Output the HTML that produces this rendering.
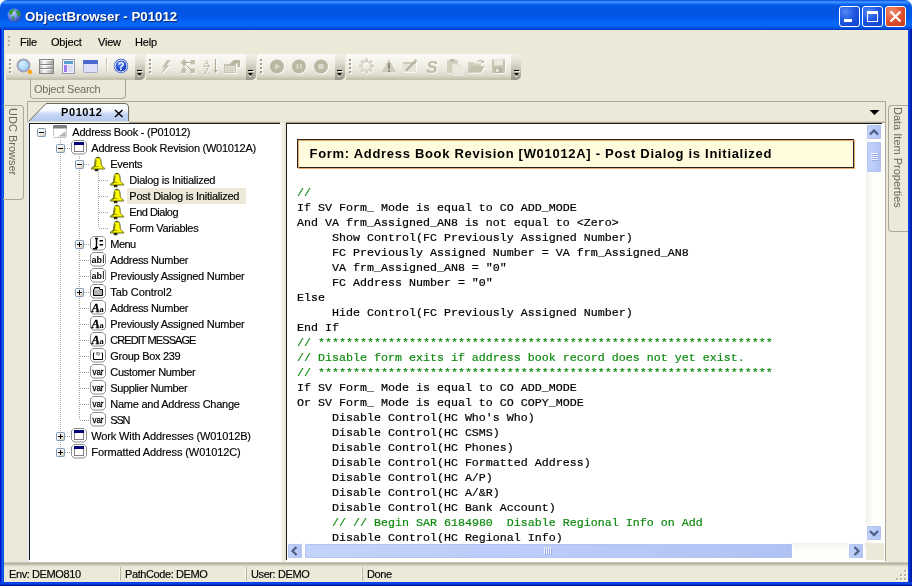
<!DOCTYPE html>
<html>
<head>
<meta charset="utf-8">
<title>ObjectBrowser - P01012</title>
<style>
*{box-sizing:border-box;margin:0;padding:0}
html,body{width:912px;height:586px;overflow:hidden;background:#ece9d8}
body{position:relative;font-family:"Liberation Sans",sans-serif;font-size:11px;color:#000}
.abs{position:absolute}
svg{position:absolute;overflow:visible}
#win{position:absolute;left:0;top:0;width:912px;height:586px;background:#ece9d8;overflow:hidden;will-change:transform}
#bl{left:0;top:29px;width:4px;height:557px;background:linear-gradient(90deg,#0016d0 0,#0016d0 1px,#0836da 1px,#0836da 2px,#1664ee 2px,#1664ee 3px,#0052de 3px)}
#br{left:908px;top:29px;width:4px;height:557px;background:linear-gradient(90deg,#0a44e4 0,#0a44e4 1px,#0434d4 1px,#0434d4 2px,#0024ba 2px,#0024ba 3px,#001aa6 3px)}
#bb{left:0;top:582px;width:912px;height:4px;background:linear-gradient(180deg,#0a40e6 0,#0a40e6 1px,#0a44ee 1px,#0a44ee 2px,#002cc8 2px,#002cc8 3px,#001aa8 3px)}
#title{left:0;top:0;width:912px;height:30px;border-radius:7px 7px 0 0;
background:linear-gradient(180deg,#0040d8 0px,#2a7cf8 1px,#3c90ff 2.500px,#1068f0 4px,#0458e4 6px,#0054e2 10px,#0258ea 18px,#0668fa 23px,#0664f4 26px,#0450dc 28px,#0034c0 30px)}
#title .txt{left:25px;top:9px;color:#fff;font-weight:bold;font-size:13.3px;line-height:16px;text-shadow:1px 1px 1px #0a246a;white-space:nowrap}
.tb{top:6px;width:21px;height:21px;border:1px solid #fff;border-radius:3px;background:radial-gradient(circle at 30% 25%,#5588f4 0%,#2058e2 45%,#0c40c8 100%)}
.tb.close{background:radial-gradient(circle at 30% 25%,#f09070 0%,#e0532e 50%,#c03818 100%)}
.menu span{position:absolute;top:36px;font-size:11px;line-height:13px;letter-spacing:-.2px;-webkit-text-stroke:.15px #000}
.bar{top:54px;height:26px;border-radius:0 5px 5px 0;background:linear-gradient(180deg,#fbfaf7 0%,#f4f3ec 30%,#ebe9de 60%,#dddbcd 82%,#c9c6b4 94%,#c0bdab 100%)}
.bar .dd{position:absolute;right:0;top:0;width:10px;height:26px;border-radius:0 5px 5px 0;background:linear-gradient(180deg,#f3f2ec 0%,#e2e0d4 30%,#c0bdac 65%,#98968a 100%)}
.sunk{background:#fff;border-top:1px solid #404040;border-left:1px solid #404040}
.code{font-family:"Liberation Mono",monospace;font-size:11.67px;line-height:15px;white-space:pre;color:#000;-webkit-text-stroke:.2px #000}
.code .g{color:#0f8a0f;-webkit-text-stroke:.2px #0f8a0f}
.tree{font-size:11px;white-space:nowrap}
.tree .t{position:absolute;height:16px;line-height:16px;font-size:11px;letter-spacing:-.25px;-webkit-text-stroke:.15px #000}
.status span{position:absolute;top:568px;font-size:11px;line-height:13px;letter-spacing:-.4px;-webkit-text-stroke:.15px #000}
.vsep{position:absolute;top:567px;width:1px;height:14px;background:#b8b5a4;box-shadow:-1px 0 0 #f8f7f0}
.sb{position:absolute;background:linear-gradient(90deg,#c4d3fb,#bccbf8 50%,#b0c2f4);border:1px solid #fff;border-radius:2px;box-shadow:0 0 0 1px #b4c4f0 inset}
</style>
</head>
<body>
<div id="win">
<div class="abs" style="left:0;top:0;width:912px;height:10px;background:#fff"></div>
<div id="title" class="abs">
  <svg style="left:6.900px;top:8px" width="14.800" height="14.800" viewBox="0 0 15 15">
    <defs><radialGradient id="gl" cx="40%" cy="35%" r="65%"><stop offset="0" stop-color="#c0ccff"/><stop offset="0.6" stop-color="#6080e4"/><stop offset="1" stop-color="#3048a8"/></radialGradient></defs>
    <circle cx="7.5" cy="7.5" r="7" fill="url(#gl)"/>
    <path d="M2 4 Q4 1 8 1.2 Q7 3.5 5.5 4 Q6 6 4 7 Q2.5 6.5 2 4Z M9 3 Q12 2 13.5 5 Q13.5 8 11.5 9 Q10 7 10.5 5.5 Q9 4.5 9 3Z M5 8 Q7.5 8 7.5 10 Q6.5 12.5 6 12 Q5 10 5 8Z" fill="#2a9a20"/>
  </svg>
  <div class="abs txt">ObjectBrowser - P01012</div>
  <div class="abs tb" style="left:839px"><div class="abs" style="left:4px;top:12px;width:8px;height:3px;background:#fff"></div></div>
  <div class="abs tb" style="left:862px"><div class="abs" style="left:4px;top:4px;width:11px;height:11px;border:1px solid #fff;border-top-width:3px"></div></div>
  <div class="abs tb close" style="left:885px"><svg style="left:0;top:0" width="19" height="19" viewBox="0 0 19 19"><path d="M4.5 4.5 L14.5 14.5 M14.5 4.5 L4.5 14.5" stroke="#fff" stroke-width="2.2"/></svg></div>
</div>
<div id="bl" class="abs"></div><div id="br" class="abs"></div><div id="bb" class="abs"></div>

<div class="menu">
  <svg style="left:8px;top:35px" width="3" height="14"><g fill="#b5b2a0"><rect x="0" y="1" width="2" height="2"/><rect x="0" y="5" width="2" height="2"/><rect x="0" y="9" width="2" height="2"/></g></svg>
  <span style="left:20px">File</span><span style="left:51px">Object</span><span style="left:98px">View</span><span style="left:135px">Help</span>
</div>

<div class="abs bar" style="left:6px;width:139px"><div class="dd"></div></div>
<div class="abs bar" style="left:146px;width:110px"><div class="dd"></div></div>
<div class="abs bar" style="left:257px;width:88px"><div class="dd"></div></div>
<div class="abs bar" style="left:346px;width:175px"><div class="dd"></div></div>

<svg style="left:0;top:54px" width="530" height="26" viewBox="0 54 530 26">
<defs>
  <linearGradient id="silver" x1="0" y1="0" x2="1" y2="0"><stop offset="0" stop-color="#b4b4b4"/><stop offset="0.35" stop-color="#fafafa"/><stop offset="0.7" stop-color="#c4c4c4"/><stop offset="1" stop-color="#a0a0a0"/></linearGradient>
  <radialGradient id="lens" cx="40%" cy="35%" r="70%"><stop offset="0" stop-color="#d8f2ff"/><stop offset="1" stop-color="#8cc8f0"/></radialGradient>
  <radialGradient id="helpg" cx="40%" cy="30%" r="70%"><stop offset="0" stop-color="#5a8cf8"/><stop offset="1" stop-color="#0a30b8"/></radialGradient>
</defs>
<g transform="translate(9,59)"><g fill="#fff"><rect x="1" y="1" width="2" height="2"/><rect x="1" y="5" width="2" height="2"/><rect x="1" y="9" width="2" height="2"/><rect x="1" y="13" width="2" height="2"/></g><g fill="#a09e8c"><rect x="0" y="0" width="2" height="2"/><rect x="0" y="4" width="2" height="2"/><rect x="0" y="8" width="2" height="2"/><rect x="0" y="12" width="2" height="2"/></g></g><g transform="translate(149,59)"><g fill="#fff"><rect x="1" y="1" width="2" height="2"/><rect x="1" y="5" width="2" height="2"/><rect x="1" y="9" width="2" height="2"/><rect x="1" y="13" width="2" height="2"/></g><g fill="#a09e8c"><rect x="0" y="0" width="2" height="2"/><rect x="0" y="4" width="2" height="2"/><rect x="0" y="8" width="2" height="2"/><rect x="0" y="12" width="2" height="2"/></g></g><g transform="translate(260,59)"><g fill="#fff"><rect x="1" y="1" width="2" height="2"/><rect x="1" y="5" width="2" height="2"/><rect x="1" y="9" width="2" height="2"/><rect x="1" y="13" width="2" height="2"/></g><g fill="#a09e8c"><rect x="0" y="0" width="2" height="2"/><rect x="0" y="4" width="2" height="2"/><rect x="0" y="8" width="2" height="2"/><rect x="0" y="12" width="2" height="2"/></g></g><g transform="translate(349,59)"><g fill="#fff"><rect x="1" y="1" width="2" height="2"/><rect x="1" y="5" width="2" height="2"/><rect x="1" y="9" width="2" height="2"/><rect x="1" y="13" width="2" height="2"/></g><g fill="#a09e8c"><rect x="0" y="0" width="2" height="2"/><rect x="0" y="4" width="2" height="2"/><rect x="0" y="8" width="2" height="2"/><rect x="0" y="12" width="2" height="2"/></g></g>
<g transform="translate(137,70)"><rect x="0" y="0" width="5" height="1" fill="#000"/><path d="M0 3 H5 L2.5 5.5 Z" fill="#000"/><path d="M1 6.5 L3 6.5 M1 1.5 H6" stroke="#fff" stroke-width="1" opacity="0.8"/></g><g transform="translate(248,70)"><rect x="0" y="0" width="5" height="1" fill="#000"/><path d="M0 3 H5 L2.5 5.5 Z" fill="#000"/><path d="M1 6.5 L3 6.5 M1 1.5 H6" stroke="#fff" stroke-width="1" opacity="0.8"/></g><g transform="translate(337,70)"><rect x="0" y="0" width="5" height="1" fill="#000"/><path d="M0 3 H5 L2.5 5.5 Z" fill="#000"/><path d="M1 6.5 L3 6.5 M1 1.5 H6" stroke="#fff" stroke-width="1" opacity="0.8"/></g><g transform="translate(514,70)"><rect x="0" y="0" width="5" height="1" fill="#000"/><path d="M0 3 H5 L2.5 5.5 Z" fill="#000"/><path d="M1 6.5 L3 6.5 M1 1.5 H6" stroke="#fff" stroke-width="1" opacity="0.8"/></g>
<!-- magnifier -->
<circle cx="23.5" cy="65.5" r="6" fill="url(#lens)" stroke="#a4a4bc" stroke-width="2"/>
<path d="M27.5 69.5 L30 72" stroke="#b0a8a8" stroke-width="2"/>
<circle cx="30" cy="72" r="2.2" fill="#f8a818"/>
<!-- database -->
<rect x="39.5" y="59.5" width="14" height="14" fill="url(#silver)" stroke="#858585"/>
<path d="M39.5 64.5 H53.5 M39.5 68.5 H53.5" stroke="#858585"/><path d="M40.5 65.5 H52.5 M40.5 69.5 H52.5 M40.5 60.5 H52.5" stroke="#fff" opacity=".7"/>
<!-- layout window -->
<rect x="62.500" y="59.500" width="12" height="14" fill="#eef0fa" stroke="#9a9aaa"/>
<rect x="64" y="61" width="9" height="3" fill="#58a0d0"/><rect x="64" y="65" width="3" height="7" fill="#a07cf4"/><rect x="68" y="65" width="5" height="7" fill="#dcdcf4"/>
<!-- window -->
<rect x="83.500" y="60.500" width="14" height="12" rx="1" fill="#dde0f6" stroke="#a8acc8"/>
<rect x="83" y="60" width="15" height="4" rx="1" fill="#4a68d0"/>
<!-- sep -->
<rect x="106" y="58" width="1" height="15" fill="#c8c5b2"/><rect x="107" y="58" width="1" height="15" fill="#fbfaf6"/>
<!-- help -->
<circle cx="121" cy="66" r="7.2" fill="#2850c8"/><circle cx="121" cy="66" r="6" fill="url(#helpg)" stroke="#fff" stroke-width="1"/>
<text x="121" y="70.300" text-anchor="middle" font-family="Liberation Sans, sans-serif" font-weight="bold" font-size="11" fill="#fff">?</text>
<!-- disabled icons -->
<filter id="soft" x="-5%" y="-20%" width="110%" height="140%"><feGaussianBlur in="SourceGraphic" stdDeviation=".45" result="b"/><feColorMatrix in="b" type="matrix" values="0 0 0 0 1  0 0 0 0 1  0 0 0 0 1  0 0 0 .75 0" result="w"/><feOffset in="w" dx="1" dy="1" result="wo"/><feMerge><feMergeNode in="wo"/><feMergeNode in="b"/></feMerge></filter>
<g filter="url(#soft)">
<g fill="#c4c2af" stroke="none">
  <!-- lightning -->
  <path d="M167 60 L171 60 L167 65 L169.500 65 L162.500 73 L161.500 72.500 L164.500 67.500 L162 67.500 Z"/>
  <!-- network -->
  <path d="M184 59 L187.500 62.500 L184 66 L180.500 62.500 Z"/><rect x="190.500" y="60" width="4.500" height="4.500"/><rect x="181.500" y="68.500" width="4.500" height="4.500"/><rect x="190.500" y="68.500" width="4.500" height="4.500"/>
  <path d="M184 62.500 H192 M184 63 L192 71 M184 63 V70" stroke="#b4b29c" stroke-width="1" fill="none"/>
  <!-- chart -->
  <rect x="224" y="64" width="12" height="9" fill="#c6c4b0"/><rect x="225" y="66" width="10" height="6" fill="#e2e0d2"/><path d="M229 64.500 L234 60 H240 V67 H237.500 V63 L232 66 Z" fill="#b8b6a0"/>
  <path d="M226 68 H234 M226 70.500 H234" stroke="#cac8b6" stroke-width="1"/>
</g>
<!-- AZ sort -->
<text x="206.500" y="65.500" text-anchor="middle" font-family="Liberation Serif, serif" font-size="9" fill="#b4b29c">A</text>
<text x="206.500" y="73.500" text-anchor="middle" font-family="Liberation Serif, serif" font-size="9" fill="#b4b29c">Z</text>
<path d="M203 66.500 H210" stroke="#c4c2ae"/><path d="M215.500 59 V71" stroke="#aeac96"/><path d="M213.500 70 H217.500 L215.500 73 Z" fill="#aeac96"/>
<!-- play/pause/stop -->
<g fill="#bab8a3"><circle cx="277" cy="66.500" r="7"/><circle cx="299" cy="66.500" r="7"/><circle cx="321" cy="66.500" r="7"/></g>
<g fill="#dcdacc"><path d="M275 63.500 L280.500 66.500 L275 69.500 Z"/><rect x="296.500" y="64" width="1.800" height="5"/><rect x="300" y="64" width="1.800" height="5"/><rect x="318.500" y="64" width="5" height="5"/></g>
<!-- gear -->
<circle cx="366.500" cy="66" r="4.500" fill="none" stroke="#d4d2c2" stroke-width="1.600"/>
<g fill="#d4d2c2"><rect x="365" y="58.500" width="3" height="3"/><rect x="365" y="70.500" width="3" height="3"/><rect x="359" y="64.500" width="3" height="3"/><rect x="371" y="64.500" width="3" height="3"/><rect x="360.700" y="60.200" width="3" height="3"/><rect x="369.300" y="60.200" width="3" height="3"/><rect x="360.700" y="68.800" width="3" height="3"/><rect x="369.300" y="68.800" width="3" height="3"/></g>
<!-- warning -->
<path d="M389 59 L396.500 72.500 H381.500 Z" fill="#cfcdbb"/><rect x="388" y="63" width="2" height="6" fill="#8c8a76"/><rect x="388" y="70" width="2" height="2" fill="#8c8a76"/>
<!-- edit -->
<rect x="403" y="62" width="13" height="10" fill="#e6e4d8"/><rect x="403" y="62" width="13" height="2" fill="#cccab8"/><path d="M406 70.500 L416.500 60" stroke="#b6b49e" stroke-width="2.400"/>
<!-- S -->
<text x="432" y="73" text-anchor="middle" font-family="Liberation Sans, sans-serif" font-style="italic" font-weight="bold" font-size="17" fill="#bcbaa5">S</text>
<!-- paste -->
<rect x="447" y="60" width="11" height="13" rx="1" fill="#d2d0be"/><rect x="450" y="59" width="5" height="3" fill="#c2c0ac"/><path d="M452 64 H458 L461.500 67.500 V74 H452 Z" fill="#eceadf" stroke="#d0cebc" stroke-width=".6"/>
<!-- folder -->
<path d="M468 62 H473 L474.500 63.500 H481 V66 H484.500 L481 72.500 H468 Z" fill="#d0cebc"/><path d="M471 66 H484.500 L481 72.500 H468 Z" fill="#c4c2ae"/><path d="M477 61.500 Q480 58.500 483 61 L484 59.500 V63 H480.500 L482 62 Q480 60.500 478 62 Z" fill="#c0beaa"/>
<!-- save -->
<rect x="492" y="59.500" width="13" height="13.500" fill="#c6c4b0"/><rect x="494" y="59.500" width="9" height="6" fill="#eceadf"/><rect x="495" y="68" width="7" height="5" fill="#b6b4a0"/><rect x="496" y="69" width="2.500" height="3" fill="#eceadf"/>
</g>
</svg>

<div class="abs" style="left:30px;top:79px;width:96px;height:20px;border:1px solid #aca899;border-top:none;border-radius:0 0 4px 4px;color:#6f6d61;font-size:11px;line-height:21px;padding-left:3px;letter-spacing:-.25px">Object Search</div>
<!-- side tabs -->
<div class="abs" style="left:3px;top:105px;width:21px;height:95px;border:1px solid #aca899;border-left:none;border-radius:0 4px 4px 0"></div>
<div class="abs" style="left:18px;top:107.500px;transform-origin:0 0;transform:rotate(90deg);font-size:11px;line-height:11px;color:#6a685c;white-space:nowrap;letter-spacing:0px">UDC Browser</div>
<div class="abs" style="left:888px;top:105px;width:20px;height:127px;border:1px solid #aca899;border-right:none;border-radius:4px 0 0 4px"></div>
<div class="abs" style="left:903px;top:107px;transform-origin:0 0;transform:rotate(90deg);font-size:11px;line-height:11px;color:#6a685c;white-space:nowrap;letter-spacing:0px">Data Item Properties</div>

<!-- doc container -->
<div class="abs" style="left:27px;top:101px;width:859px;height:1px;background:#aca899"></div>
<div class="abs" style="left:27px;top:101px;width:1px;height:460px;background:#aca899"></div>
<div class="abs" style="left:885px;top:101px;width:1px;height:460px;background:#aca899"></div>

<!-- tab -->
<svg style="left:27px;top:101px" width="110" height="22" viewBox="0 0 110 22">
  <defs><linearGradient id="tg" x1="0" y1="0" x2="0" y2="1"><stop offset="0" stop-color="#ffffff"/><stop offset="0.36" stop-color="#f4f8fe"/><stop offset="0.54" stop-color="#c6d6f5"/><stop offset="1" stop-color="#b2c6f0"/></linearGradient></defs>
  <path d="M1.500 22 L1.500 20.500 L19 2.500 L98 2.500 Q101.500 2.500 101.500 6 L101.500 22 Z" fill="url(#tg)" stroke="#6a6a5e" stroke-width="1"/>
</svg>
<div class="abs" style="left:61px;top:106px;font-weight:bold;font-size:11px;line-height:13px;letter-spacing:.6px">P01012</div>
<svg style="left:114px;top:109px" width="10" height="9" viewBox="0 0 10 9"><path d="M1 1 L8.500 8 M8.500 1 L1 8" stroke="#000" stroke-width="1.500"/></svg>
<svg style="left:869px;top:110px" width="11" height="6"><path d="M.5 0 H10.500 L5.500 5 Z" fill="#000"/></svg>

<!-- panels -->
<div class="abs" style="left:27px;top:121px;width:858px;height:1px;background:#d8d5c5"></div>
<div class="abs" style="left:27px;top:122px;width:858px;height:440px;background:#fff;border-left:2px solid #e6e9f7;border-top:1px solid #aaa796"></div>
<div class="abs" style="left:29px;top:122px;width:100px;height:1px;background:#f4f5fb"></div>
<div class="abs" style="left:29px;top:123px;width:251px;height:437px;border-top:1px solid #1a1a1a;border-left:1px solid #1a1a1a"></div>
<div class="abs" style="left:280px;top:122px;width:6px;height:440px;background:linear-gradient(90deg,#fdfdfa,#f3f1e8 35%,#eeece0 70%,#e4e1d2)"></div>
<div class="abs" style="left:280px;top:121px;width:6px;height:2px;background:#e6e3d4"></div>
<div class="abs" style="left:286px;top:123px;width:596px;height:437px;border-top:1px solid #1a1a1a;border-left:1px solid #1a1a1a"></div>
<div class="tree">
<svg style="left:0;top:0" width="290" height="470" viewBox="0 0 290 470"><defs>
<linearGradient id="bx" x1="0" y1="0" x2="1" y2="1"><stop offset="0" stop-color="#fff"/><stop offset=".5" stop-color="#f4f2ea"/><stop offset="1" stop-color="#c8c2b0"/></linearGradient>
<linearGradient id="rt" x1="0" y1="0" x2="1" y2="1"><stop offset="0" stop-color="#f0f0f0"/><stop offset="1" stop-color="#9a9a9a"/></linearGradient>
</defs>
<g stroke="#a2a2a2" stroke-width="1" stroke-dasharray="1 1" fill="none"><path d="M60.5 140 V452" /><path d="M79.5 156 V420" /><path d="M98.5 172 V228" /><path d="M65 148.5 H71" /><path d="M84 164.5 H90" /><path d="M99 180.5 H109" /><path d="M99 196.5 H109" /><path d="M99 212.5 H109" /><path d="M99 228.5 H109" /><path d="M84 244.5 H90" /><path d="M80 260.5 H90" /><path d="M80 276.5 H90" /><path d="M84 292.5 H90" /><path d="M80 308.5 H90" /><path d="M80 324.5 H90" /><path d="M80 340.5 H90" /><path d="M80 356.5 H90" /><path d="M80 372.5 H90" /><path d="M80 388.5 H90" /><path d="M80 404.5 H90" /><path d="M80 420.5 H90" /><path d="M65 436.5 H71" /><path d="M65 452.5 H71" /></g>
<g transform="translate(37,128)"><rect x=".5" y=".5" width="8" height="8" rx="1" fill="url(#bx)" stroke="#7b98b6"/><rect x="2" y="4" width="5" height="1" fill="#000"/></g>
<g transform="translate(52,124)"><rect x="1.5" y="1.5" width="13" height="12" rx="1" fill="#fff" stroke="#c4c4c4"/><rect x="1" y="1" width="14" height="3.5" rx="1" fill="#7e7e7e"/><path d="M13.5 7 V12.500 H6 Z" fill="url(#rt)"/></g>
<g transform="translate(56,144)"><rect x=".5" y=".5" width="8" height="8" rx="1" fill="url(#bx)" stroke="#7b98b6"/><rect x="2" y="4" width="5" height="1" fill="#000"/></g>
<g transform="translate(71,140)"><path d="M3 .5 H13 L15.500 3 V11.500 L13 14 H3 L.5 11.500 V3 Z" fill="#fff" stroke="#8e8e8e"/><rect x="3.500" y="2.500" width="9" height="9" fill="#fff" stroke="#808080"/><rect x="3" y="2" width="10" height="3" fill="#00007c"/></g>
<g transform="translate(75,160)"><rect x=".5" y=".5" width="8" height="8" rx="1" fill="url(#bx)" stroke="#7b98b6"/><rect x="2" y="4" width="5" height="1" fill="#000"/></g>
<g transform="translate(90,156)"><path d="M8 1.200 C6 1.200 5.200 2.800 5 5.200 L4.700 8.600 C4.500 10 2.600 11.400 1.400 12.100 L1.400 13 H14.600 V12.100 C13.400 11.400 11.500 10 11.300 8.600 L11 5.200 C10.800 2.800 10 1.200 8 1.200 Z" fill="#ffff00" stroke="#55551a" stroke-width=".9"/><path d="M6 4 L5.600 8.800 C5.400 10.200 4.200 11.200 3.400 11.800" stroke="#7a7a10" stroke-width="1.100" fill="none"/><path d="M6.500 1.800 H9.500" stroke="#4a4a30" stroke-width="1"/><path d="M4.500 10.500 H8.500" stroke="#8a8a10" stroke-width=".8"/><rect x="4.800" y="13" width="3.600" height="2.200" fill="#2a2a00"/></g>
<g transform="translate(109,172)"><path d="M8 1.200 C6 1.200 5.200 2.800 5 5.200 L4.700 8.600 C4.500 10 2.600 11.400 1.400 12.100 L1.400 13 H14.600 V12.100 C13.400 11.400 11.500 10 11.300 8.600 L11 5.200 C10.800 2.800 10 1.200 8 1.200 Z" fill="#ffff00" stroke="#55551a" stroke-width=".9"/><path d="M6 4 L5.600 8.800 C5.400 10.200 4.200 11.200 3.400 11.800" stroke="#7a7a10" stroke-width="1.100" fill="none"/><path d="M6.500 1.800 H9.500" stroke="#4a4a30" stroke-width="1"/><path d="M4.500 10.500 H8.500" stroke="#8a8a10" stroke-width=".8"/><rect x="4.800" y="13" width="3.600" height="2.200" fill="#2a2a00"/></g>
<g transform="translate(109,188)"><path d="M8 1.200 C6 1.200 5.200 2.800 5 5.200 L4.700 8.600 C4.500 10 2.600 11.400 1.400 12.100 L1.400 13 H14.600 V12.100 C13.400 11.400 11.500 10 11.300 8.600 L11 5.200 C10.800 2.800 10 1.200 8 1.200 Z" fill="#ffff00" stroke="#55551a" stroke-width=".9"/><path d="M6 4 L5.600 8.800 C5.400 10.200 4.200 11.200 3.400 11.800" stroke="#7a7a10" stroke-width="1.100" fill="none"/><path d="M6.500 1.800 H9.500" stroke="#4a4a30" stroke-width="1"/><path d="M4.500 10.500 H8.500" stroke="#8a8a10" stroke-width=".8"/><rect x="4.800" y="13" width="3.600" height="2.200" fill="#2a2a00"/></g>
<g transform="translate(109,204)"><path d="M8 1.200 C6 1.200 5.200 2.800 5 5.200 L4.700 8.600 C4.500 10 2.600 11.400 1.400 12.100 L1.400 13 H14.600 V12.100 C13.400 11.400 11.500 10 11.300 8.600 L11 5.200 C10.800 2.800 10 1.200 8 1.200 Z" fill="#ffff00" stroke="#55551a" stroke-width=".9"/><path d="M6 4 L5.600 8.800 C5.400 10.200 4.200 11.200 3.400 11.800" stroke="#7a7a10" stroke-width="1.100" fill="none"/><path d="M6.500 1.800 H9.500" stroke="#4a4a30" stroke-width="1"/><path d="M4.500 10.500 H8.500" stroke="#8a8a10" stroke-width=".8"/><rect x="4.800" y="13" width="3.600" height="2.200" fill="#2a2a00"/></g>
<g transform="translate(109,220)"><path d="M8 1.200 C6 1.200 5.200 2.800 5 5.200 L4.700 8.600 C4.500 10 2.600 11.400 1.400 12.100 L1.400 13 H14.600 V12.100 C13.400 11.400 11.500 10 11.300 8.600 L11 5.200 C10.800 2.800 10 1.200 8 1.200 Z" fill="#ffff00" stroke="#55551a" stroke-width=".9"/><path d="M6 4 L5.600 8.800 C5.400 10.200 4.200 11.200 3.400 11.800" stroke="#7a7a10" stroke-width="1.100" fill="none"/><path d="M6.500 1.800 H9.500" stroke="#4a4a30" stroke-width="1"/><path d="M4.500 10.500 H8.500" stroke="#8a8a10" stroke-width=".8"/><rect x="4.800" y="13" width="3.600" height="2.200" fill="#2a2a00"/></g>
<g transform="translate(75,240)"><rect x=".5" y=".5" width="8" height="8" rx="1" fill="url(#bx)" stroke="#7b98b6"/><rect x="2" y="4" width="5" height="1" fill="#000"/><rect x="4" y="2" width="1" height="5" fill="#000"/></g>
<g transform="translate(90,236)"><path d="M3 .5 H13 L15.500 3 V11.500 L13 14 H3 L.5 11.500 V3 Z" fill="#fff" stroke="#8e8e8e"/><path d="M5 2.500 H8 M6.500 2.500 V11.500 M5 11.500 H8" stroke="#000" stroke-width="1.400" fill="none"/><rect x="9.500" y="4" width="3.500" height="1.500" fill="#000"/><rect x="9.500" y="8" width="3.500" height="1.500" fill="#000"/><rect x="3" y="12" width="4" height="1.500" fill="#000"/></g>
<g transform="translate(90,252)"><path d="M3 .5 H13 L15.500 3 V11.500 L13 14 H3 L.5 11.500 V3 Z" fill="#fff" stroke="#8e8e8e"/><text x="1.500" y="11" font-family="Liberation Sans, sans-serif" font-weight="bold" font-size="9.500" fill="#000" textLength="10.500" lengthAdjust="spacingAndGlyphs">ab</text><text x="12.200" y="11" font-family="Liberation Sans, sans-serif" font-size="10" fill="#000">l</text></g>
<g transform="translate(90,268)"><path d="M3 .5 H13 L15.500 3 V11.500 L13 14 H3 L.5 11.500 V3 Z" fill="#fff" stroke="#8e8e8e"/><text x="1.500" y="11" font-family="Liberation Sans, sans-serif" font-weight="bold" font-size="9.500" fill="#000" textLength="10.500" lengthAdjust="spacingAndGlyphs">ab</text><text x="12.200" y="11" font-family="Liberation Sans, sans-serif" font-size="10" fill="#000">l</text></g>
<g transform="translate(75,288)"><rect x=".5" y=".5" width="8" height="8" rx="1" fill="url(#bx)" stroke="#7b98b6"/><rect x="2" y="4" width="5" height="1" fill="#000"/><rect x="4" y="2" width="1" height="5" fill="#000"/></g>
<g transform="translate(90,284)"><path d="M3 .5 H13 L15.500 3 V11.500 L13 14 H3 L.5 11.500 V3 Z" fill="#fff" stroke="#8e8e8e"/><path d="M3.500 11.500 V5.500 H4.500 V3.500 H9.500 V5.500 H12.500 V11.500 Z" fill="#b4b4b4" stroke="#000" stroke-width="1"/><path d="M4.500 5.500 H9.500" stroke="#e8e8e8"/></g>
<g transform="translate(90,300)"><path d="M3 .5 H13 L15.500 3 V11.500 L13 14 H3 L.5 11.500 V3 Z" fill="#fff" stroke="#8e8e8e"/><text x="1.500" y="11.500" font-family="Liberation Serif, serif" font-weight="bold" font-style="italic" font-size="12.500" fill="#000" stroke="#000" stroke-width=".35">A</text><text x="9.500" y="11.500" font-family="Liberation Serif, serif" font-weight="bold" font-size="8.500" fill="#000">a</text></g>
<g transform="translate(90,316)"><path d="M3 .5 H13 L15.500 3 V11.500 L13 14 H3 L.5 11.500 V3 Z" fill="#fff" stroke="#8e8e8e"/><text x="1.500" y="11.500" font-family="Liberation Serif, serif" font-weight="bold" font-style="italic" font-size="12.500" fill="#000" stroke="#000" stroke-width=".35">A</text><text x="9.500" y="11.500" font-family="Liberation Serif, serif" font-weight="bold" font-size="8.500" fill="#000">a</text></g>
<g transform="translate(90,332)"><path d="M3 .5 H13 L15.500 3 V11.500 L13 14 H3 L.5 11.500 V3 Z" fill="#fff" stroke="#8e8e8e"/><text x="1.500" y="11.500" font-family="Liberation Serif, serif" font-weight="bold" font-style="italic" font-size="12.500" fill="#000" stroke="#000" stroke-width=".35">A</text><text x="9.500" y="11.500" font-family="Liberation Serif, serif" font-weight="bold" font-size="8.500" fill="#000">a</text></g>
<g transform="translate(90,348)"><path d="M3 .5 H13 L15.500 3 V11.500 L13 14 H3 L.5 11.500 V3 Z" fill="#fff" stroke="#8e8e8e"/><path d="M4.500 5 H3.500 V11.500 H12.500 V5 H11.500" stroke="#000" fill="none"/><text x="8" y="6.500" text-anchor="middle" font-family="Liberation Sans, sans-serif" font-size="4.500" fill="#000">xy</text></g>
<g transform="translate(90,364)"><path d="M3 .5 H13 L15.500 3 V11.500 L13 14 H3 L.5 11.500 V3 Z" fill="#fff" stroke="#8e8e8e"/><text x="2.500" y="10.500" font-family="Liberation Sans, sans-serif" font-size="8.500" fill="#000" stroke="#000" stroke-width=".3" textLength="11" lengthAdjust="spacingAndGlyphs">var</text></g>
<g transform="translate(90,380)"><path d="M3 .5 H13 L15.500 3 V11.500 L13 14 H3 L.5 11.500 V3 Z" fill="#fff" stroke="#8e8e8e"/><text x="2.500" y="10.500" font-family="Liberation Sans, sans-serif" font-size="8.500" fill="#000" stroke="#000" stroke-width=".3" textLength="11" lengthAdjust="spacingAndGlyphs">var</text></g>
<g transform="translate(90,396)"><path d="M3 .5 H13 L15.500 3 V11.500 L13 14 H3 L.5 11.500 V3 Z" fill="#fff" stroke="#8e8e8e"/><text x="2.500" y="10.500" font-family="Liberation Sans, sans-serif" font-size="8.500" fill="#000" stroke="#000" stroke-width=".3" textLength="11" lengthAdjust="spacingAndGlyphs">var</text></g>
<g transform="translate(90,412)"><path d="M3 .5 H13 L15.500 3 V11.500 L13 14 H3 L.5 11.500 V3 Z" fill="#fff" stroke="#8e8e8e"/><text x="2.500" y="10.500" font-family="Liberation Sans, sans-serif" font-size="8.500" fill="#000" stroke="#000" stroke-width=".3" textLength="11" lengthAdjust="spacingAndGlyphs">var</text></g>
<g transform="translate(56,432)"><rect x=".5" y=".5" width="8" height="8" rx="1" fill="url(#bx)" stroke="#7b98b6"/><rect x="2" y="4" width="5" height="1" fill="#000"/><rect x="4" y="2" width="1" height="5" fill="#000"/></g>
<g transform="translate(71,428)"><path d="M3 .5 H13 L15.500 3 V11.500 L13 14 H3 L.5 11.500 V3 Z" fill="#fff" stroke="#8e8e8e"/><rect x="3.500" y="2.500" width="9" height="9" fill="#fff" stroke="#808080"/><rect x="3" y="2" width="10" height="3" fill="#00007c"/></g>
<g transform="translate(56,448)"><rect x=".5" y=".5" width="8" height="8" rx="1" fill="url(#bx)" stroke="#7b98b6"/><rect x="2" y="4" width="5" height="1" fill="#000"/><rect x="4" y="2" width="1" height="5" fill="#000"/></g>
<g transform="translate(71,444)"><path d="M3 .5 H13 L15.500 3 V11.500 L13 14 H3 L.5 11.500 V3 Z" fill="#fff" stroke="#8e8e8e"/><rect x="3.500" y="2.500" width="9" height="9" fill="#fff" stroke="#808080"/><rect x="3" y="2" width="10" height="3" fill="#00007c"/></g>
</svg>
<span class="t" id="t0" style="left:72.3px;top:124px;letter-spacing:-0.24px">Address Book - (P01012)</span>
<span class="t" id="t1" style="left:91.3px;top:140px;letter-spacing:-0.25px">Address Book Revision (W01012A)</span>
<span class="t" id="t2" style="left:110.3px;top:156px;letter-spacing:-0.27px">Events</span>
<span class="t" id="t3" style="left:129.3px;top:172px;letter-spacing:-0.25px">Dialog is Initialized</span>
<div class="abs" style="left:127.00000000000001px;top:188px;width:119px;height:16px;background:#ece9d8"></div>
<span class="t" id="t4" style="left:129.3px;top:188px;letter-spacing:-0.24px">Post Dialog is Initialized</span>
<span class="t" id="t5" style="left:129.3px;top:204px;letter-spacing:-0.5px">End Dialog</span>
<span class="t" id="t6" style="left:129.3px;top:220px;letter-spacing:-0.34px">Form Variables</span>
<span class="t" id="t7" style="left:110.3px;top:236px;letter-spacing:-0.58px">Menu</span>
<span class="t" id="t8" style="left:110.3px;top:252px;letter-spacing:-0.34px">Address Number</span>
<span class="t" id="t9" style="left:110.3px;top:268px;letter-spacing:-0.25px">Previously Assigned Number</span>
<span class="t" id="t10" style="left:110.3px;top:284px;letter-spacing:-0.08px">Tab Control2</span>
<span class="t" id="t11" style="left:110.3px;top:300px;letter-spacing:-0.34px">Address Number</span>
<span class="t" id="t12" style="left:110.3px;top:316px;letter-spacing:-0.25px">Previously Assigned Number</span>
<span class="t" id="t13" style="left:110.3px;top:332px;letter-spacing:-0.93px">CREDIT MESSAGE</span>
<span class="t" id="t14" style="left:110.3px;top:348px;letter-spacing:-0.3px">Group Box 239</span>
<span class="t" id="t15" style="left:110.3px;top:364px;letter-spacing:-0.32px">Customer Number</span>
<span class="t" id="t16" style="left:110.3px;top:380px;letter-spacing:-0.37px">Supplier Number</span>
<span class="t" id="t17" style="left:110.3px;top:396px;letter-spacing:-0.25px">Name and Address Change</span>
<span class="t" id="t18" style="left:110.3px;top:412px;letter-spacing:-1.2px">SSN</span>
<span class="t" id="t19" style="left:91.3px;top:428px;letter-spacing:-0.14px">Work With Addresses (W01012B)</span>
<span class="t" id="t20" style="left:91.3px;top:444px;letter-spacing:-0.11px">Formatted Address (W01012C)</span>
</div>
<!-- header box -->
<div class="abs" style="left:297px;top:139px;width:557px;height:29px;background:#fffbdc;border:1px solid #2a2018;font-weight:bold;font-size:13px;line-height:28px;padding-left:11.500px;white-space:nowrap;letter-spacing:.7px" id="hdr"><span id="hdrt">Form: Address Book Revision [W01012A] - Post Dialog is Initialized</span></div>
<div class="abs" style="left:298px;top:140px;width:557px;height:29px;border:1px solid #e9a96c"></div>

<div class="abs code" style="left:297px;top:186px;width:568px;height:357px;overflow:hidden"><span class="g">//</span>
<span id="c1">If SV Form_ Mode is equal to CO ADD_MODE</span>
And VA frm_Assigned_AN8 is not equal to &lt;Zero&gt;
     Show Control(FC Previously Assigned Number)
     FC Previously Assigned Number = VA frm_Assigned_AN8
     VA frm_Assigned_AN8 = "0"
     FC Address Number = "0"
Else
     Hide Control(FC Previously Assigned Number)
End If
<span class="g">// *****************************************************************</span>
<span class="g">// Disable form exits if address book record does not yet exist.</span>
<span class="g">// *****************************************************************</span>
If SV Form_ Mode is equal to CO ADD_MODE
Or SV Form_ Mode is equal to CO COPY_MODE
     Disable Control(HC Who's Who)
     Disable Control(HC CSMS)
     Disable Control(HC Phones)
     Disable Control(HC Formatted Address)
     Disable Control(HC A/P)
     Disable Control(HC A/&amp;R)
     Disable Control(HC Bank Account)
     <span class="g">// // Begin SAR 6184980  Disable Regional Info on Add</span>
     Disable Control(HC Regional Info)
</div>

<!-- scrollbars -->
<div class="abs" style="left:866px;top:124px;width:17px;height:419px;background:linear-gradient(90deg,#f3f1ec,#fefefb 40%,#fefefb)"></div>
<div class="abs" style="left:287px;top:543px;width:579px;height:17px;background:linear-gradient(180deg,#f3f1ec,#fefefb 40%,#fefefb)"></div>
<div class="abs" style="left:866px;top:543px;width:18px;height:17px;background:#ece9d8"></div>
<div class="sb" style="left:866px;top:124px;width:16px;height:16px"></div>
<div class="sb" style="left:866px;top:141px;width:16px;height:32px"></div>
<div class="sb" style="left:866px;top:525px;width:16px;height:16px"></div>
<div class="sb" style="left:287px;top:543px;width:16px;height:16px"></div>
<div class="sb" style="left:304px;top:543px;width:489px;height:16px"></div>
<div class="sb" style="left:848px;top:543px;width:16px;height:16px"></div>
<svg style="left:0;top:0" width="912" height="586" viewBox="0 0 912 586">
  <g fill="none" stroke="#4d6185" stroke-width="2.300">
    <path d="M870 134.500 L874 130.500 L878 134.500"/>
    <path d="M870 531 L874 535 L878 531"/>
    <path d="M296.500 547 L292.500 551 L296.500 555"/>
    <path d="M854.500 547 L858.500 551 L854.500 555"/>
  </g>
  <g stroke="#eef4fe" stroke-width="1"><path d="M871 153.500 H878 M871 155.500 H878 M871 157.500 H878 M871 159.500 H878"/>
  <path d="M544.500 547 V554 M546.500 547 V554 M548.500 547 V554 M550.500 547 V554"/></g>
  <g stroke="#8ca0d8" stroke-width="1" opacity=".6"><path d="M872 154.500 H879 M872 156.500 H879 M872 158.500 H879 M872 160.500 H879"/>
  <path d="M545.500 548 V555 M547.500 548 V555 M549.500 548 V555 M551.500 548 V555"/></g>
</svg>

<!-- status -->
<div class="abs" style="left:4px;top:562px;width:904px;height:5px;background:linear-gradient(180deg,#d6d3c2 0%,#b4b19f 30%,#c4c1b0 50%,#e0ddcc 78%,#ece9d8 100%)"></div>
<div class="status">
  <span style="left:9px">Env: DEMO810</span><span style="left:125px">PathCode: DEMO</span><span style="left:251px">User: DEMO</span><span style="left:367px">Done</span>
  <div class="vsep" style="left:120px"></div><div class="vsep" style="left:246px"></div><div class="vsep" style="left:362px"></div>
</div>
<svg style="left:896px;top:570px" width="13" height="13"><g fill="#fff"><rect x="9" y="1" width="2" height="2"/><rect x="5" y="5" width="2" height="2"/><rect x="9" y="5" width="2" height="2"/><rect x="1" y="9" width="2" height="2"/><rect x="5" y="9" width="2" height="2"/><rect x="9" y="9" width="2" height="2"/></g><g fill="#b8b4a0"><rect x="8" y="0" width="2" height="2"/><rect x="4" y="4" width="2" height="2"/><rect x="8" y="4" width="2" height="2"/><rect x="0" y="8" width="2" height="2"/><rect x="4" y="8" width="2" height="2"/><rect x="8" y="8" width="2" height="2"/></g></svg>
</div>
</body>
</html>
